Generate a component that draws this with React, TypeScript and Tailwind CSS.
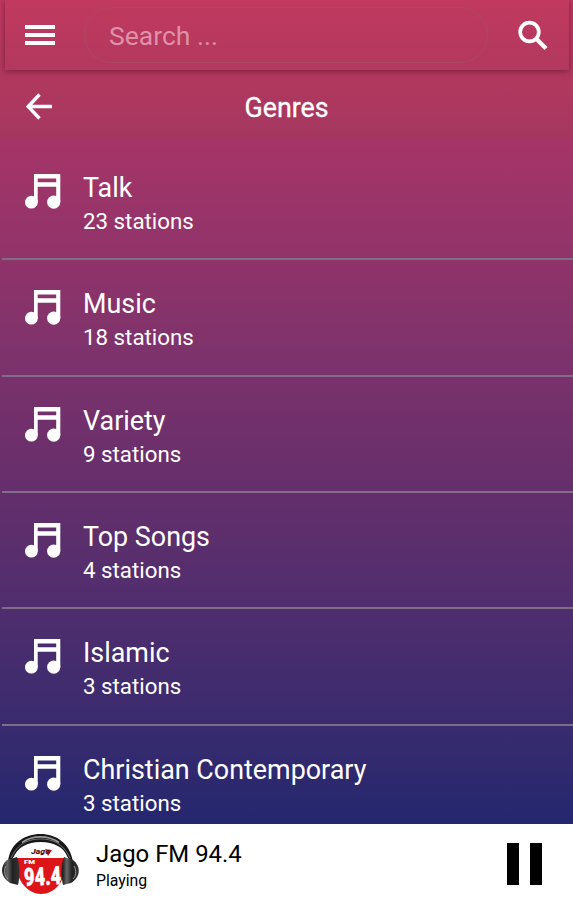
const genres = [
  { name: "Talk", stations: 23 },
  { name: "Music", stations: 18 },
  { name: "Variety", stations: 9 },
  { name: "Top Songs", stations: 4 },
  { name: "Islamic", stations: 3 },
  { name: "Christian Contemporary", stations: 3 },
];

function NoteIcon() {
  return (
    <svg className="h-[36px] w-[36px] shrink-0" viewBox="0 0 36 36" fill="#fff">
      <path fillRule="evenodd" d="M9 0H35.3V28H31.2V12.7H12.7V28H9ZM12.7 4.5V8.3H31.2V4.5Z" />
      <circle cx="6.4" cy="28.2" r="6.4" />
      <circle cx="28.7" cy="28.2" r="6.6" />
    </svg>
  );
}

function StationLogo() {
  return (
    <svg className="mt-[3px] h-[62px] w-[78px] shrink-0" viewBox="0 0 78 62">
      <defs>
        <linearGradient id="cup" x1="0" x2="1">
          <stop offset="0" stopColor="#111" />
          <stop offset="0.3" stopColor="#666" />
          <stop offset="0.6" stopColor="#222" />
          <stop offset="1" stopColor="#333" />
        </linearGradient>
      </defs>
      <circle cx="39" cy="34" r="27" fill="#fff" />
      <path d="M14 25H63C66 44 55 61 39 61C24 61 12 44 14 25Z" fill="#dd1519" />
      <path d="M6 29C8 10 23 1 38.500 1S68 10 71 29L66 25C62 14 52 9 38.500 9S16 14 11 25Z" fill="#171717" />
      <path d="M20 9.500C31 2 46 2 57 9.500" fill="none" stroke="#999" strokeWidth="1.8" />
      <path d="M9 25C16 10 27 6 38.500 6S61 10 68 25" fill="none" stroke="#888" strokeWidth="0.8" />
      <path d="M5 27L15 24C18 31 18 44 16 52L8 50C-2 44-2 33 5 27Z" fill="url(#cup)" />
      <path d="M71 27L62 24C59 31 59 44 61 52L69 50C79 44 79 33 71 27Z" fill="url(#cup)" />
      <path d="M4 33C1 38 3 43 6 46M72 33C75 38 74 43 71 46" fill="none" stroke="#999" strokeWidth="1" />
      <path d="M43 16L50 17L46 23Z" fill="#d7181c" />
      <text x="29" y="21" fontFamily="Roboto, sans-serif" fontSize="8" fontWeight="900" fontStyle="italic" fill="#511" textLength="19" lengthAdjust="spacingAndGlyphs">Jago</text>
      <text x="22" y="31" fontFamily="Roboto, sans-serif" fontSize="6" fontWeight="900" fill="#fff" textLength="11" lengthAdjust="spacingAndGlyphs">FM</text>
      <text x="22" y="52" transform="rotate(-3 41 43)" fontFamily="Roboto, sans-serif" fontSize="25" fontWeight="900" fill="#fff" stroke="#fff" strokeWidth="0.5" textLength="37" lengthAdjust="spacingAndGlyphs">94.4</text>
    </svg>
  );
}

export default function App() {
  return (
    <div className="flex h-[900px] w-[573px] flex-col overflow-hidden bg-white font-['Roboto',sans-serif] text-white">
      <header className="h-[140px] shrink-0 bg-linear-to-b from-[#c1395e] to-[#a4375f]">
        <div className="mr-[4px] ml-[5px] flex h-[70px] items-center shadow-[0_1px_6px_rgba(90,20,50,0.7)]">
          <button aria-label="Menu" className="ml-[20px] flex h-[20px] w-[30px] flex-col justify-between">
            <span className="h-[4px] w-full bg-white" />
            <span className="h-[4px] w-full bg-white" />
            <span className="h-[4px] w-full bg-white" />
          </button>
          <div className="ml-[29px] flex h-[56px] w-[404px] items-center rounded-full border border-[#a84c61]/80 pl-[24px] text-[26.5px] text-[#df91a7]">
            <span className="pt-[2px]">Search ...</span>
          </div>
          <button aria-label="Search" className="ml-[30px]">
            <svg className="h-[31px] w-[31px]" viewBox="0 0 31 31" fill="none" stroke="#fff">
              <circle cx="11.500" cy="12" r="9.3" strokeWidth="3.7" />
              <path d="M18 18.500L28 28.500" strokeWidth="4.2" />
            </svg>
          </button>
        </div>
        <div className="grid h-[70px] grid-cols-[58px_1fr_58px] items-center">
          <button aria-label="Back" className="pt-[2px] pl-[25px]">
            <svg className="h-[27px] w-[27px]" viewBox="0 0 27 27" fill="none" stroke="#fff" strokeWidth="3.4">
              <path d="M14.500 1.500L3.200 13.500L14.500 25.500M3 13.500H27" />
            </svg>
          </button>
          <h1 className="pt-[6px] text-center text-[26.8px] [-webkit-text-stroke:0.3px_white]">Genres</h1>
        </div>
      </header>

      <main className="min-h-0 flex-1 overflow-hidden bg-linear-to-b from-[#a63468] via-[#642e6c] via-52% to-[#24276f] pt-[4px]">
        {genres.map((genre) => (
          <div key={genre.name} className="ml-[2px] flex h-[116.35px] border-b-2 border-[#806d86] pt-[30px] pl-[23px]">
            <NoteIcon />
            <div className="-mt-px ml-[22px]">
              <h2 className="text-[26.9px] leading-[30px]">{genre.name}</h2>
              <p className="mt-[4px] text-[22.3px] leading-[28px]">{genre.stations} stations</p>
            </div>
          </div>
        ))}
      </main>

      <footer className="flex h-[76px] shrink-0 items-center bg-white pr-[31px] pl-[2px] text-black">
        <StationLogo />
        <div className="mt-[7px] ml-[16px]">
          <p className="text-[23.9px] leading-[30px]">Jago FM 94.4</p>
          <p className="text-[15.8px] leading-[24px]">Playing</p>
        </div>
        <button aria-label="Pause" className="mt-[3px] ml-auto flex h-[42px] gap-[11px]">
          <span className="w-[12px] bg-black" />
          <span className="w-[12px] bg-black" />
        </button>
      </footer>
    </div>
  );
}
